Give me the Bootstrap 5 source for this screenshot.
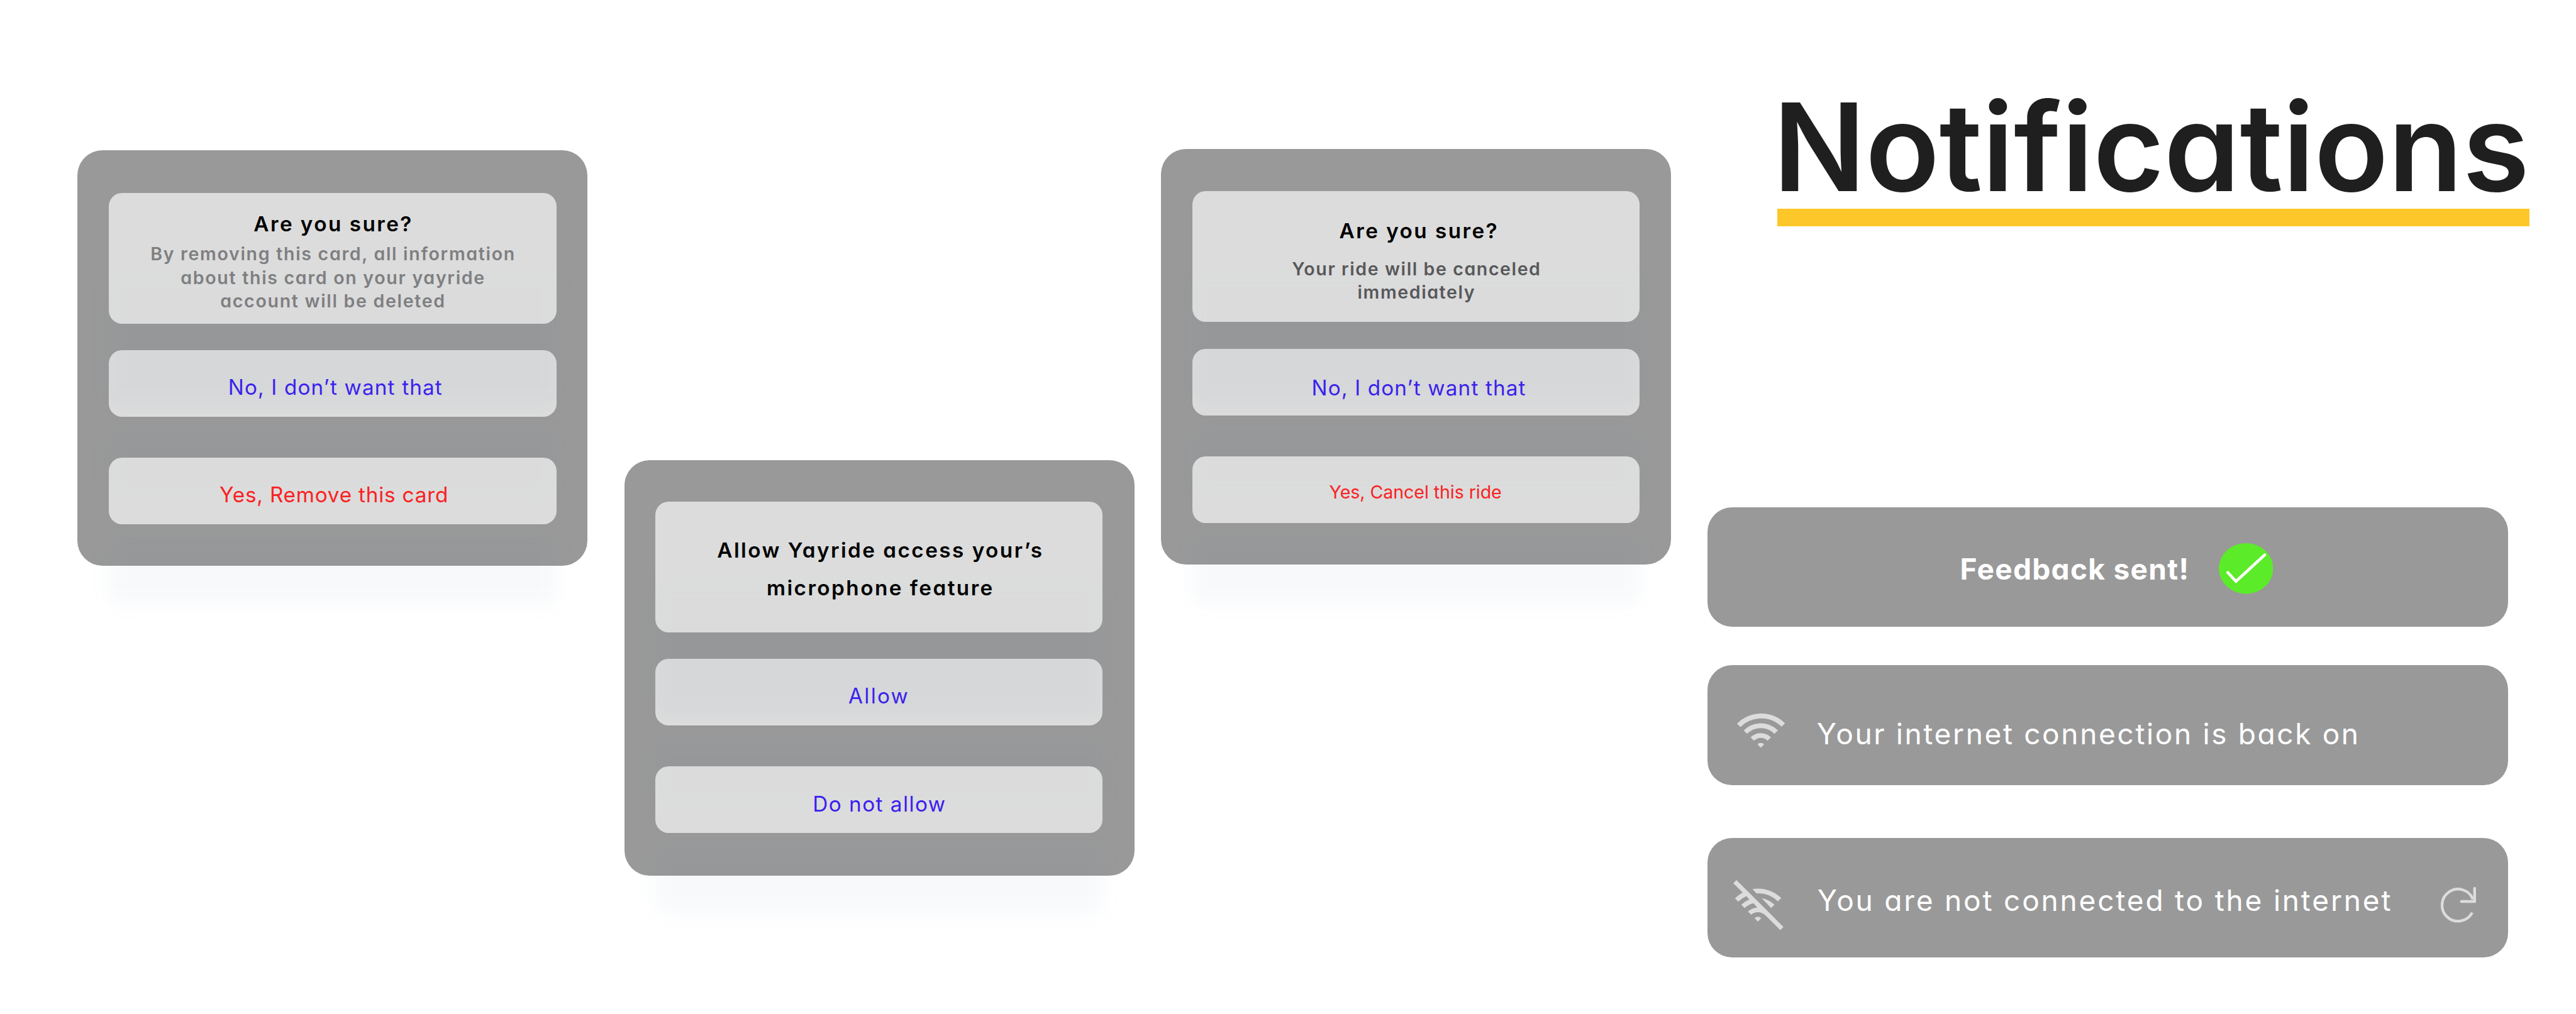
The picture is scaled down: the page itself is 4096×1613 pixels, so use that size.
<!DOCTYPE html>
<html lang="en">
<head>
<meta charset="utf-8">
<meta name="viewport" content="width=device-width, initial-scale=1">
<title>Notifications</title>
<link rel="stylesheet" href="https://cdn.jsdelivr.net/npm/bootstrap@5.3.0/dist/css/bootstrap.min.css">
<style>
  body { font-family: Inter, "Open Sans", sans-serif; font-feature-settings: "cv11"; background: #fff; color: #000; overflow: hidden; }
  .board { width: 4096px; height: 1613px; }

  /* Dialogs */
  .dialog { width: 811px; height: 661px; border-radius: 40px; background: #999; isolation: isolate; padding-right: 48px; }
  .dialog-remove { margin: 239.2px 0 0 122.6px; padding-top: 68px; padding-left: 50.4px; }
  .dialog-mic { margin: 731.7px 0 0 59.9px; padding-top: 66.5px; padding-left: 48.3px; }
  .dialog-ride { margin: 236.8px 0 0 41.4px; padding-top: 67.2px; padding-left: 49.9px; }

  /* Translucent tile with a soft shadow dropped far below it */
  .tile { position: relative; isolation: isolate; width: 711.7px; height: 106.3px; text-align: center; white-space: nowrap; border: 0; background: none; padding: 12.7px 0 0; }
  .tile::before { content: ""; position: absolute; inset: 0; z-index: -2; transform: translateY(128px); background: rgba(95, 120, 165, .046); border-radius: 20px; filter: blur(14px); }
  .tile::after { content: ""; position: absolute; inset: 0; z-index: -1; background: rgba(255, 255, 255, .66); border-radius: 21px; }
  .tile-head { height: 207.6px; z-index: 1; margin-bottom: 42.2px; }
  .tile-gap { margin-bottom: 64.9px; }

  .ask { font-size: 33.3px; font-weight: 600; line-height: 40px; letter-spacing: 2.45px; padding-left: 2.5px; margin: 0; }
  .detail { font-size: 28.6px; font-weight: 600; line-height: 37.5px; letter-spacing: 1.67px; padding-left: 1.5px; margin: 0; color: #7f7f81; }
  .choice { font-size: 33.3px; line-height: 40px; color: #3b1df0; display: block; }
  .choice-danger { color: #f92222; }

  .dialog-remove .tile-head { padding-top: 28.6px; }
  .dialog-remove .detail { margin-top: 9.4px; }
  .dialog-remove .choice { letter-spacing: 1.14px; padding-left: 9px; }
  .dialog-remove .choice-danger { letter-spacing: .79px; padding-left: 4.5px; margin-top: -2px; }

  .dialog-mic .tile-head { padding-top: 46.7px; }
  .dialog-mic .ask { line-height: 60.5px; padding-left: 4.5px; }
  .dialog-mic .choice { letter-spacing: 2.27px; }
  .dialog-mic .choice-alt { letter-spacing: 1.45px; padding-left: 1.5px; }

  .dialog-ride .tile-head { padding-top: 43px; margin-bottom: 43.4px; }
  .dialog-ride .ask { padding-left: 9.5px; }
  .dialog-ride .detail { margin-top: 21.9px; color: #58585a; letter-spacing: 1.57px; }
  .dialog-ride .choice { letter-spacing: 1.14px; padding-left: 9px; margin-top: 6px; }
  .dialog-ride .choice-danger { font-size: 28.6px; letter-spacing: -.07px; padding: 0 2px 0 0; margin-top: -5.4px; }

  /* Heading and banners */
  .side { margin-left: 58px; padding-top: 144px; width: 1381px; }
  .page-title { width: 1196.4px; margin: 0 0 447.1px 110.9px; padding-bottom: 7.5px; border-bottom: 28px solid #fec729; color: #1f1f1f; font-size: 193.9px; font-weight: 600; line-height: 180px; letter-spacing: -.43px; text-indent: -6.6px; white-space: nowrap; }
  .banner { width: 1272.8px; height: 190.5px; border-radius: 39px; background: #999; color: #fff; font-size: 46.1px; line-height: 60px; white-space: nowrap; }
  .banner svg { display: block; flex: none; }
  .banner-sent { padding: 57.6px 0 0 401.6px; margin-bottom: 61px; }
  .banner-sent span { font-weight: 700; letter-spacing: 1.27px; margin: 10.8px 46.5px 0 0; }
  .banner-on { padding: 77.3px 0 0 46.9px; margin-bottom: 84.2px; }
  .banner-on span { letter-spacing: 2.59px; margin: 1.2px 0 0 50.8px; }
  .banner-off { padding: 67.5px 0 0 41.5px; }
  .banner-off span { letter-spacing: 2.77px; margin: 1.3px 76.5px 0 53.5px; }
  .banner-off .reload { margin-top: 10.5px; }
</style>
</head>
<body>
<main class="board d-flex align-items-start">

  <section class="dialog dialog-remove flex-shrink-0">
    <div class="tile tile-head">
      <h2 class="ask">Are you sure?</h2>
      <p class="detail">By removing this card, all information<br>about this card on your yayride<br>account will be deleted</p>
    </div>
    <button type="button" class="tile tile-gap d-block"><span class="choice">No, I don’t want that</span></button>
    <button type="button" class="tile d-block"><span class="choice choice-danger">Yes, Remove this card</span></button>
  </section>

  <section class="dialog dialog-mic flex-shrink-0">
    <div class="tile tile-head">
      <h2 class="ask">Allow Yayride access your’s<br>microphone feature</h2>
    </div>
    <button type="button" class="tile tile-gap d-block"><span class="choice">Allow</span></button>
    <button type="button" class="tile d-block"><span class="choice choice-alt">Do not allow</span></button>
  </section>

  <section class="dialog dialog-ride flex-shrink-0">
    <div class="tile tile-head">
      <h2 class="ask">Are you sure?</h2>
      <p class="detail">Your ride will be canceled<br>immediately</p>
    </div>
    <button type="button" class="tile tile-gap d-block"><span class="choice">No, I don’t want that</span></button>
    <button type="button" class="tile d-block"><span class="choice choice-danger">Yes, Cancel this ride</span></button>
  </section>

  <section class="side flex-shrink-0">
    <h1 class="page-title">Notifications</h1>

    <div class="banner banner-sent d-flex align-items-start">
      <span>Feedback sent!</span>
      <svg width="86.6" height="80.7" viewBox="0 0 86.6 80.7">
        <ellipse cx="43.3" cy="40.35" rx="43.3" ry="40.35" fill="#5beb28"/>
        <path d="M14.4 46.8 27.3 60.8 73 18.8" fill="none" stroke="#fff" stroke-width="4.6" stroke-linecap="round"/>
      </svg>
    </div>

    <div class="banner banner-on d-flex align-items-start">
      <svg width="76.3" height="54.1" viewBox="156 196 392 278">
        <g fill="none" stroke="#dcdcdc" stroke-width="39.5">
          <path d="M169.500 292.500A258 258 0 0 1 534 290"/>
          <path d="M224.100 348.100A178 178 0 0 1 475.900 348.100"/>
          <path d="M280.700 404.700A98 98 0 0 1 419.300 404.700"/>
        </g>
        <path d="M350 475 322.500 447.500A39 39 0 0 1 378 447.500Z" fill="#dcdcdc"/>
      </svg>
      <span>Your internet connection is back on</span>
    </div>

    <div class="banner banner-off d-flex align-items-start">
      <svg width="79.8" height="79.6" viewBox="128 118 410 409" fill="#dcdcdc">
        <path d="M154 118 538 501 512 527 395 410Q364 380 329 380 300 380 275 401L248 376Q280 344 325 341L292 307Q252 318 220 347L194 320Q224 290 260 277L235 249Q199 265 169 294L142 267Q171 238 205 219L128 144Z"/>
        <path d="M285 191A270 270 0 0 1 520 265L493 292A230 230 0 0 0 318 227Z"/>
        <path d="M360 266Q421 278 464 320L438 347Z"/>
        <path d="M302 430Q329 405 356 430L329 457Z"/>
      </svg>
      <span>You are not connected to the internet</span>
      <svg class="reload" width="56" height="57" viewBox="144 112 288 293" fill="none" stroke="#dcdcdc">
        <path d="M407 212A131 131 0 1 0 401 322" stroke-width="22.500"/>
        <path d="M421 123V230.500H313" stroke-width="23" stroke-linecap="round" stroke-linejoin="round"/>
      </svg>
    </div>
  </section>

</main>
<script src="https://cdn.jsdelivr.net/npm/bootstrap@5.3.0/dist/js/bootstrap.bundle.min.js"></script>
</body>
</html>
